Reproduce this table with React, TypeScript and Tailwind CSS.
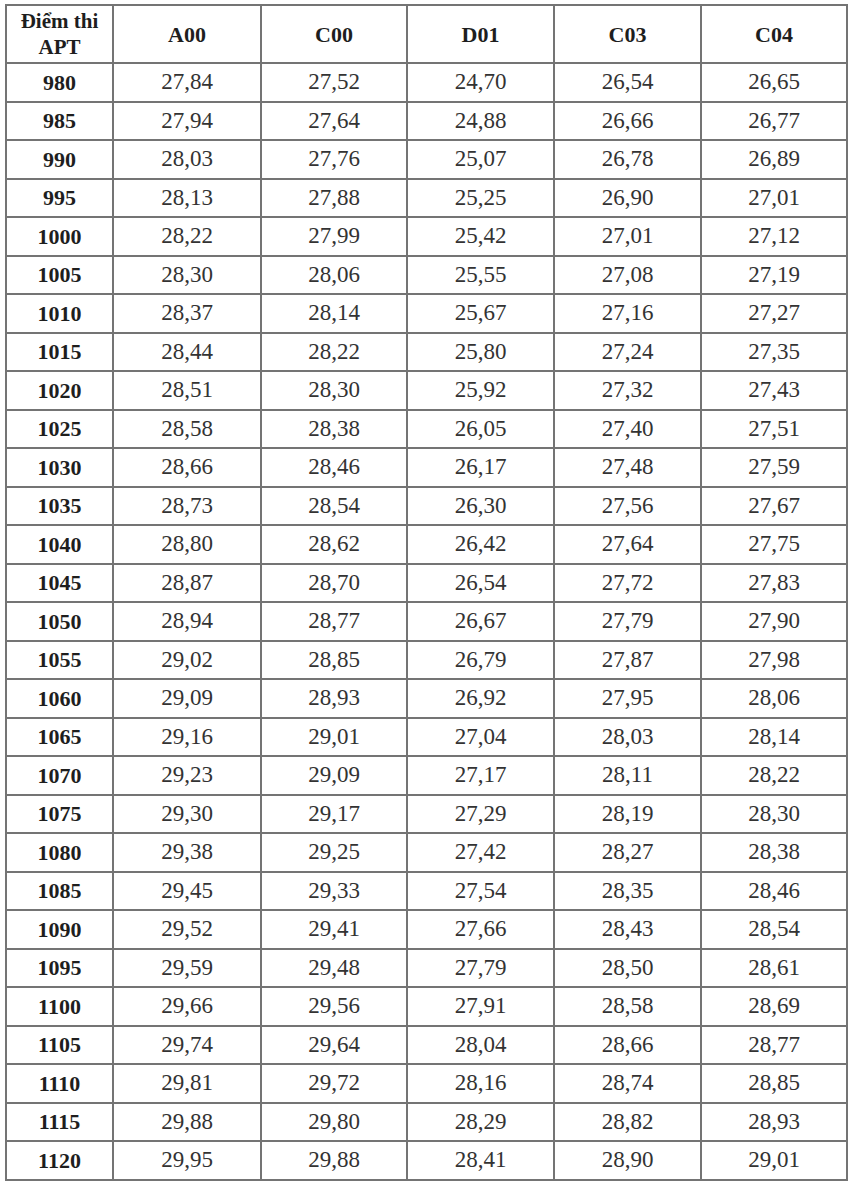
const columns = ["A00", "C00", "D01", "C03", "C04"];

const rows: [string, string[]][] = [
  ["980", ["27,84", "27,52", "24,70", "26,54", "26,65"]],
  ["985", ["27,94", "27,64", "24,88", "26,66", "26,77"]],
  ["990", ["28,03", "27,76", "25,07", "26,78", "26,89"]],
  ["995", ["28,13", "27,88", "25,25", "26,90", "27,01"]],
  ["1000", ["28,22", "27,99", "25,42", "27,01", "27,12"]],
  ["1005", ["28,30", "28,06", "25,55", "27,08", "27,19"]],
  ["1010", ["28,37", "28,14", "25,67", "27,16", "27,27"]],
  ["1015", ["28,44", "28,22", "25,80", "27,24", "27,35"]],
  ["1020", ["28,51", "28,30", "25,92", "27,32", "27,43"]],
  ["1025", ["28,58", "28,38", "26,05", "27,40", "27,51"]],
  ["1030", ["28,66", "28,46", "26,17", "27,48", "27,59"]],
  ["1035", ["28,73", "28,54", "26,30", "27,56", "27,67"]],
  ["1040", ["28,80", "28,62", "26,42", "27,64", "27,75"]],
  ["1045", ["28,87", "28,70", "26,54", "27,72", "27,83"]],
  ["1050", ["28,94", "28,77", "26,67", "27,79", "27,90"]],
  ["1055", ["29,02", "28,85", "26,79", "27,87", "27,98"]],
  ["1060", ["29,09", "28,93", "26,92", "27,95", "28,06"]],
  ["1065", ["29,16", "29,01", "27,04", "28,03", "28,14"]],
  ["1070", ["29,23", "29,09", "27,17", "28,11", "28,22"]],
  ["1075", ["29,30", "29,17", "27,29", "28,19", "28,30"]],
  ["1080", ["29,38", "29,25", "27,42", "28,27", "28,38"]],
  ["1085", ["29,45", "29,33", "27,54", "28,35", "28,46"]],
  ["1090", ["29,52", "29,41", "27,66", "28,43", "28,54"]],
  ["1095", ["29,59", "29,48", "27,79", "28,50", "28,61"]],
  ["1100", ["29,66", "29,56", "27,91", "28,58", "28,69"]],
  ["1105", ["29,74", "29,64", "28,04", "28,66", "28,77"]],
  ["1110", ["29,81", "29,72", "28,16", "28,74", "28,85"]],
  ["1115", ["29,88", "29,80", "28,29", "28,82", "28,93"]],
  ["1120", ["29,95", "29,88", "28,41", "28,90", "29,01"]],
];

const cell = "border-2 border-[#747474] p-0 text-center align-middle";

const App = () => {
  return (
    <div className="bg-white min-h-screen pt-[4px] pl-[5px] font-['Liberation_Serif',serif]">
      <table className="table-fixed border-collapse w-[841px]">
        <colgroup>
          <col className="w-[107px]" />
          <col className="w-[148px]" />
          <col className="w-[146px]" />
          <col className="w-[147px]" />
          <col className="w-[147px]" />
          <col className="w-[146px]" />
        </colgroup>
        <thead>
          <tr className="h-[58px]">
            <th className={`${cell} text-[21px] leading-[26px] font-bold text-[#1e1e1e]`}>
              Điểm thi
              <br />
              APT
            </th>
            {columns.map((c) => (
              <th key={c} className={`${cell} text-[22px] font-bold text-[#1e1e1e]`}>
                {c}
              </th>
            ))}
          </tr>
        </thead>
        <tbody>
          {rows.map(([score, values]) => (
            <tr key={score} className="h-[38.5px]">
              <td className={`${cell} text-[22px] font-bold text-[#1e1e1e]`}>{score}</td>
              {values.map((v, i) => (
                <td key={i} className={`${cell} text-[23px] text-[#333333]`}>
                  {v}
                </td>
              ))}
            </tr>
          ))}
        </tbody>
      </table>
    </div>
  );
};

export default App;
